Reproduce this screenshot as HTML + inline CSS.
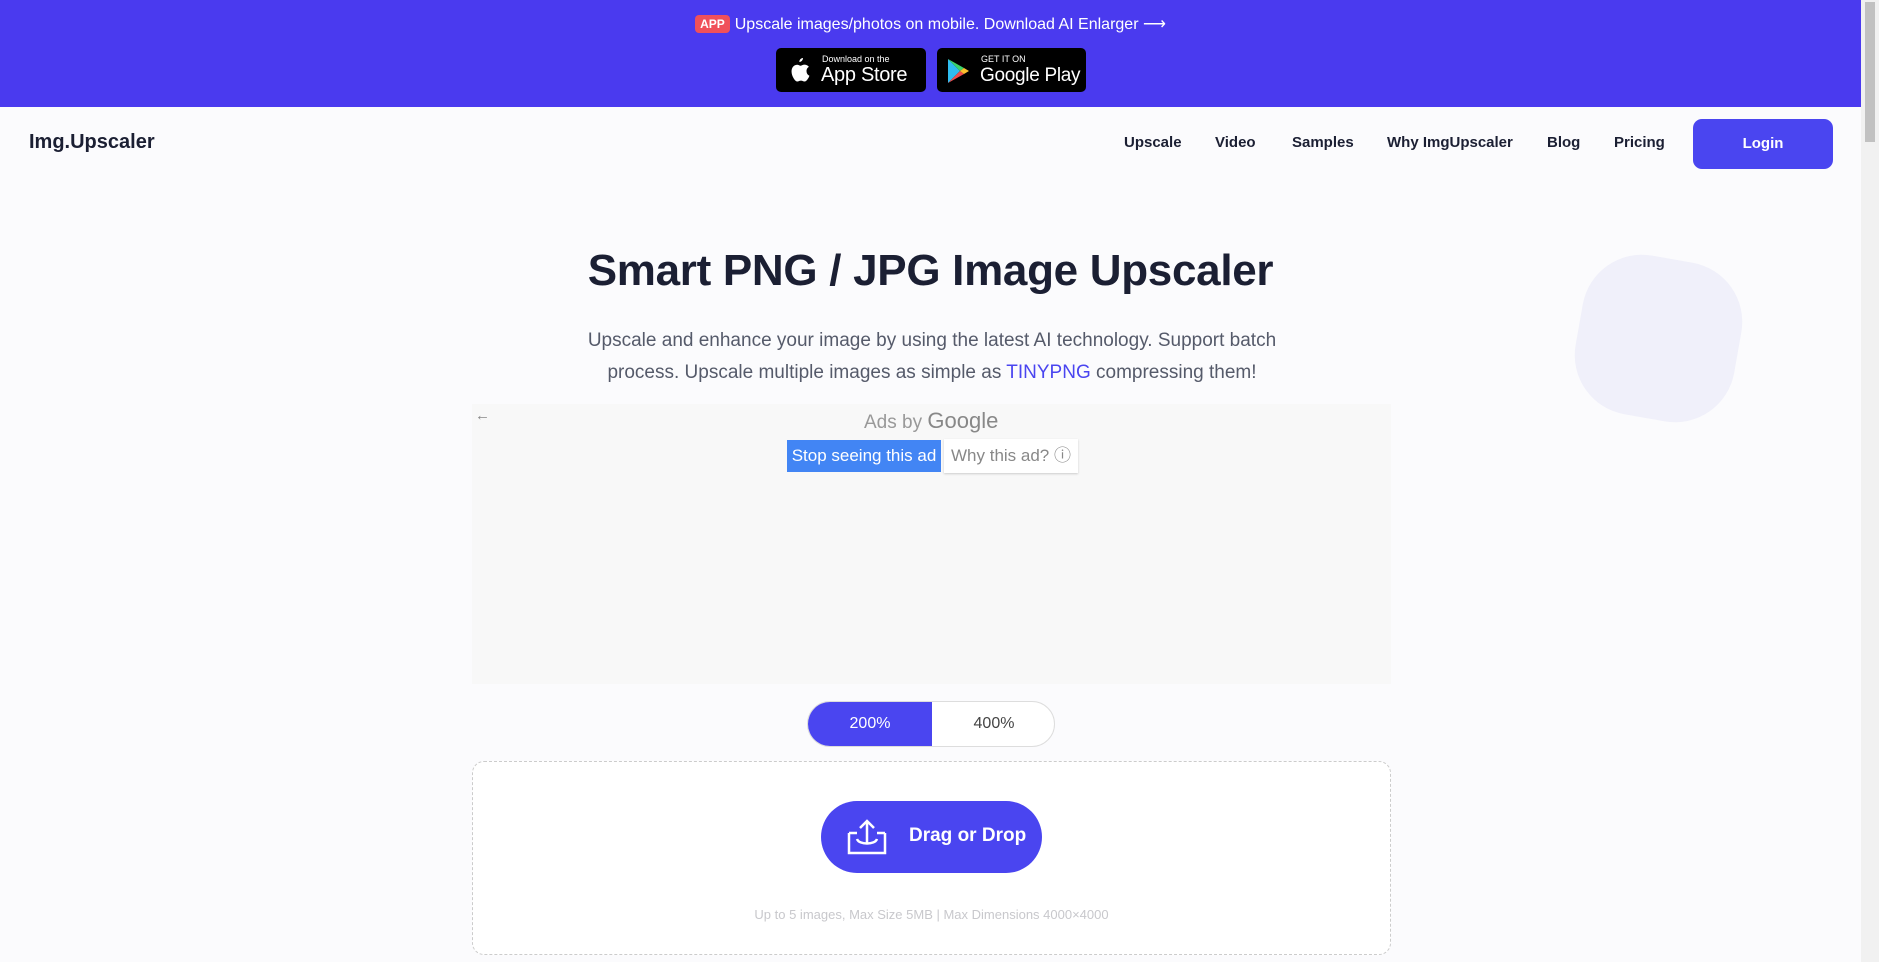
<!DOCTYPE html>
<html><head><meta charset="utf-8"><style>
*{box-sizing:border-box;margin:0;padding:0}
body{width:1879px;height:962px;overflow:hidden;font-family:"Liberation Sans",sans-serif;background:#fbfbfd;position:relative;color:#1b1f33}
.banner{position:absolute;left:0;top:0;width:1861px;height:107px;background:#4a3aef;color:#fff}
.btxt{position:absolute;top:14px;left:0;width:1861px;text-align:center;font-size:16px}
.app{background:#f0505a;border-radius:4px;font-weight:bold;font-size:12px;padding:2px 5px;margin-right:5px;vertical-align:1px}
.badge{position:absolute;top:48px;height:44px;background:#000;border-radius:5px;color:#fff;white-space:nowrap}
.badge .s{position:absolute;font-size:9px}
.badge .b{position:absolute;font-size:20px;letter-spacing:-0.3px}
.nav{position:absolute;top:107px;left:0;width:1861px;height:73px;background:#fbfbfd}
.logo{position:absolute;left:29px;top:131px;font-weight:bold;font-size:20px}
.ni{position:absolute;top:134px;font-size:15px;font-weight:bold;color:#1b1f33}
.login{position:absolute;left:1693px;top:119px;width:140px;height:50px;background:#4a45f0;border-radius:9px;color:#fff;font-weight:bold;font-size:15px;text-align:center;line-height:50px}
.scroll{position:absolute;right:0;top:0;width:18px;height:962px;background:#f1f1f1}
.scroll div{position:absolute;left:4px;top:2px;width:10px;height:140px;background:#c1c1c1}
h1{position:absolute;top:246px;left:0;width:1861px;text-align:center;font-size:44px;font-weight:bold;color:#1b1f33;letter-spacing:-0.3px}
.sub{position:absolute;top:325px;left:560px;width:744px;text-align:center;font-size:19px;line-height:32px;color:#555a6a}
.sub span{color:#4a45f0}
.ad{position:absolute;left:472px;top:404px;width:919px;height:280px;background:#f8f8f8}
.blob{position:absolute;left:1578px;top:258px;width:161px;height:161px;background:#f0f0fa;border-radius:60px;transform:rotate(10deg)}
.tog{position:absolute;left:807px;top:701px;width:248px;height:46px;border:1px solid #ddd;border-radius:23px;background:#fff;overflow:hidden;font-size:16px}
.tog div{position:absolute;top:0;height:46px;line-height:44px;text-align:center;width:124px}
.up{position:absolute;left:472px;top:761px;width:919px;height:194px;border:1px dashed #ccc;border-radius:12px;background:#fff}
.drag{position:absolute;left:821px;top:801px;width:221px;height:72px;background:#4a45f0;border-radius:36px;color:#fff;font-weight:bold;font-size:19px}
</style></head><body>
<div class="banner">
<div class="btxt"><span class="app">APP</span>Upscale images/photos on mobile. Download AI Enlarger ⟶</div>
<div class="badge" style="left:776px;width:150px"><svg style="position:absolute;left:11px;top:8px" width="24" height="28" viewBox="0 0 24 28"><path fill="#fff" d="M16 2c0 2-1.6 4-3.6 4-.2-2 1.5-4 3.6-4zM19.5 15c0-3 2.3-4 2.4-4.1-1.3-2-3.4-2.2-4-2.2-1.7-.2-3.3 1-4.2 1-.9 0-2.2-1-3.6-1-1.9 0-3.6 1.1-4.6 2.8-2 3.4-.5 8.4 1.4 11.2.9 1.3 2 2.8 3.5 2.8 1.4-.1 1.9-.9 3.6-.9s2.1.9 3.6.9c1.5 0 2.4-1.4 3.3-2.7 1-1.5 1.5-3 1.5-3.1 0 0-2.9-1.1-2.9-4.7z"/></svg><span class="s" style="left:46px;top:6px">Download on the</span><span class="b" style="left:45px;top:16px">App Store</span></div>
<div class="badge" style="left:937px;width:149px"><svg style="position:absolute;left:10px;top:10px" width="24" height="26" viewBox="0 0 24 26"><path fill="#2fbcf0" d="M1 1l12 12L1 25z"/><path fill="#3bd36a" d="M1 1l16 9-4 3z"/><path fill="#ef4c4c" d="M1 25l16-9-4-3z"/><path fill="#fbc02d" d="M17 10l5 3-5 3-4-3z"/></svg><span class="s" style="left:44px;top:6px">GET IT ON</span><span class="b" style="left:43px;top:17px;font-size:19px">Google Play</span></div>
</div>
<div class="nav"></div>
<div class="logo">Img.Upscaler</div>
<div class="ni" style="left:1124px">Upscale</div>
<div class="ni" style="left:1215px">Video</div>
<div class="ni" style="left:1292px">Samples</div>
<div class="ni" style="left:1387px">Why ImgUpscaler</div>
<div class="ni" style="left:1547px">Blog</div>
<div class="ni" style="left:1614px">Pricing</div>
<div class="login">Login</div>
<div class="blob"></div>
<h1>Smart PNG / JPG Image Upscaler</h1>
<div class="sub">Upscale and enhance your image by using the latest AI technology. Support batch process. Upscale multiple images as simple as <span>TINYPNG</span> compressing them!</div>
<div class="ad">
<div style="position:absolute;left:3px;top:3px;color:#888;font-size:15px">←</div>
<div style="position:absolute;left:392px;top:4px;color:#999;font-size:19px">Ads by <b style="font-size:22px;color:#888;font-weight:normal">Google</b></div>
<div style="position:absolute;left:315px;top:36px;width:154px;height:32px;background:#4285f4;color:#fff;font-size:17px;line-height:32px;text-align:center">Stop seeing this ad</div>
<div style="position:absolute;left:472px;top:35px;width:134px;height:34px;background:#fff;color:#888;font-size:17px;line-height:34px;text-align:center;box-shadow:0 1px 2px #ccc">Why this ad? ⓘ</div>
</div>
<div class="tog"><div style="left:0;background:#4a45f0;color:#fff">200%</div><div style="left:124px;color:#444">400%</div></div>
<div class="up"><div style="position:absolute;left:0;width:100%;top:145px;text-align:center;color:#c8c8cc;font-size:13px">Up to 5 images, Max Size 5MB | Max Dimensions 4000×4000</div></div>
<div class="drag"><svg style="position:absolute;left:26px;top:16px" width="40" height="38" viewBox="0 0 40 38" fill="none" stroke="#fff" stroke-width="2.5"><path d="M2 16v20h36V16M2 16h8M30 16h8M10 22c2 6 18 6 20 0"/><path d="M20 26V4M13 11l7-7 7 7"/></svg><span style="position:absolute;left:88px;top:24px">Drag or Drop</span></div>
<div class="scroll"><div></div></div>
</body></html>
